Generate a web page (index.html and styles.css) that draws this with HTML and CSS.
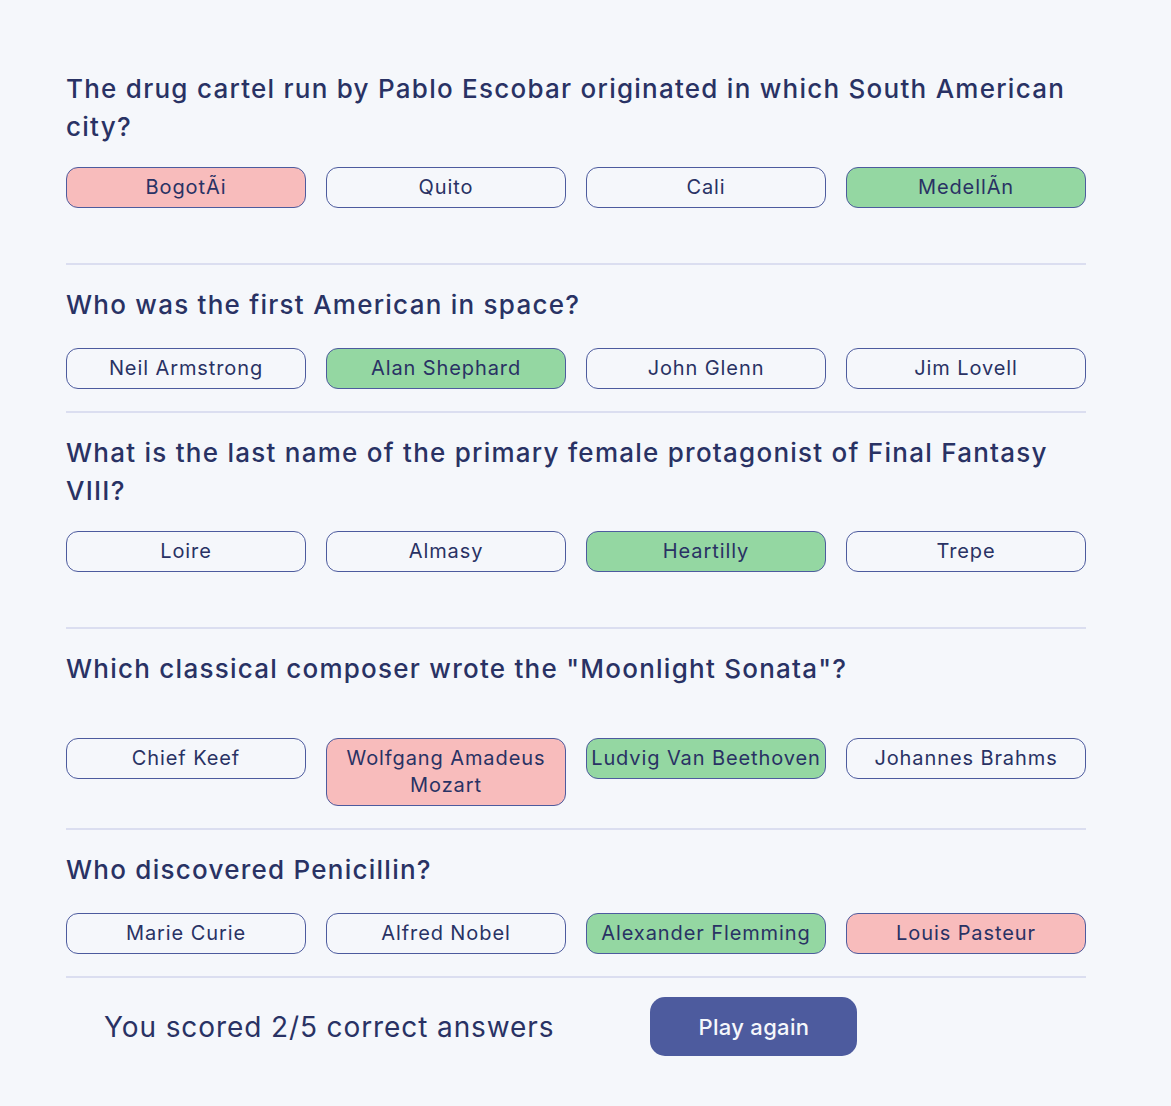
FILE: index.html
```html
<!DOCTYPE html>
<html lang="en">
<head>
<meta charset="utf-8">
<title>Quizzical</title>
<link rel="stylesheet" href="styles.css">
</head>
<body>
<main class="quiz">
  <section class="question question--loose-bottom">
    <h2 class="question__title">The drug cartel run by Pablo Escobar originated in which South American city?</h2>
    <div class="options">
      <button class="option option--wrong">BogotÃi</button>
      <button class="option">Quito</button>
      <button class="option">Cali</button>
      <button class="option option--correct">MedellÃn</button>
    </div>
  </section>
  <section class="question">
    <h2 class="question__title">Who was the first American in space?</h2>
    <div class="options">
      <button class="option">Neil Armstrong</button>
      <button class="option option--correct">Alan Shephard</button>
      <button class="option">John Glenn</button>
      <button class="option">Jim Lovell</button>
    </div>
  </section>
  <section class="question question--loose-bottom">
    <h2 class="question__title">What is the last name of the primary female protagonist of Final Fantasy VIII?</h2>
    <div class="options">
      <button class="option">Loire</button>
      <button class="option">Almasy</button>
      <button class="option option--correct">Heartilly</button>
      <button class="option">Trepe</button>
    </div>
  </section>
  <section class="question question--loose-top">
    <h2 class="question__title">Which classical composer wrote the "Moonlight Sonata"?</h2>
    <div class="options">
      <button class="option">Chief Keef</button>
      <button class="option option--wrong">Wolfgang Amadeus Mozart</button>
      <button class="option option--correct">Ludvig Van Beethoven</button>
      <button class="option">Johannes Brahms</button>
    </div>
  </section>
  <section class="question">
    <h2 class="question__title">Who discovered Penicillin?</h2>
    <div class="options">
      <button class="option">Marie Curie</button>
      <button class="option">Alfred Nobel</button>
      <button class="option option--correct">Alexander Flemming</button>
      <button class="option option--wrong">Louis Pasteur</button>
    </div>
  </section>
  <footer class="result">
    <p class="result__text">You scored 2/5 correct answers</p>
    <button class="play-btn">Play again</button>
  </footer>
</main>
</body>
</html>
```
FILE: styles.css
```css
* { box-sizing: border-box; }

body {
  margin: 0;
  background: #F5F7FB;
  color: #293264;
  font-family: Inter, "Open Sans", sans-serif;
}

.quiz {
  width: 1086px;
  padding: 70px 0 40px 66px;
}

.question {
  padding: 21px 0 22px;
  border-bottom: 2px solid #DBDEF0;
}

.question:first-child {
  padding-top: 0;
}

.question--loose-bottom {
  padding-bottom: 55px;
}

.question__title {
  margin: 0;
  font-size: 26px;
  line-height: 38px;
  font-weight: 500;
  letter-spacing: 1.25px;
}

.options {
  display: grid;
  grid-template-columns: repeat(4, 240px);
  column-gap: 20px;
  align-items: start;
  margin-top: 24px;
}

.question--loose-bottom .options {
  margin-top: 21px;
}

.question--loose-top .options {
  margin-top: 50px;
}

.option {
  font-family: inherit;
  font-size: 20px;
  line-height: 27px;
  letter-spacing: 0.9px;
  color: #293264;
  background: transparent;
  border: 1px solid #4D5B9E;
  border-radius: 12px;
  padding: 6px 2px;
  text-align: center;
  cursor: pointer;
}

.option--correct {
  background: #94D7A2;
}

.option--wrong {
  background: #F8BCBC;
}

.result {
  display: flex;
  align-items: center;
  gap: 96px;
  padding: 19px 0 0 38px;
}

.result__text {
  margin: 0;
  font-family: Inter, "Liberation Sans", sans-serif;
  font-size: 28px;
  letter-spacing: 0.9px;
  color: #293264;
}

.play-btn {
  width: 207px;
  height: 59px;
  border: none;
  border-radius: 15px;
  background: #4D5B9E;
  color: #F5F7FB;
  font-family: Inter, "Liberation Sans", sans-serif;
  font-size: 22px;
  font-weight: 500;
  letter-spacing: 0.3px;
  cursor: pointer;
}
```
